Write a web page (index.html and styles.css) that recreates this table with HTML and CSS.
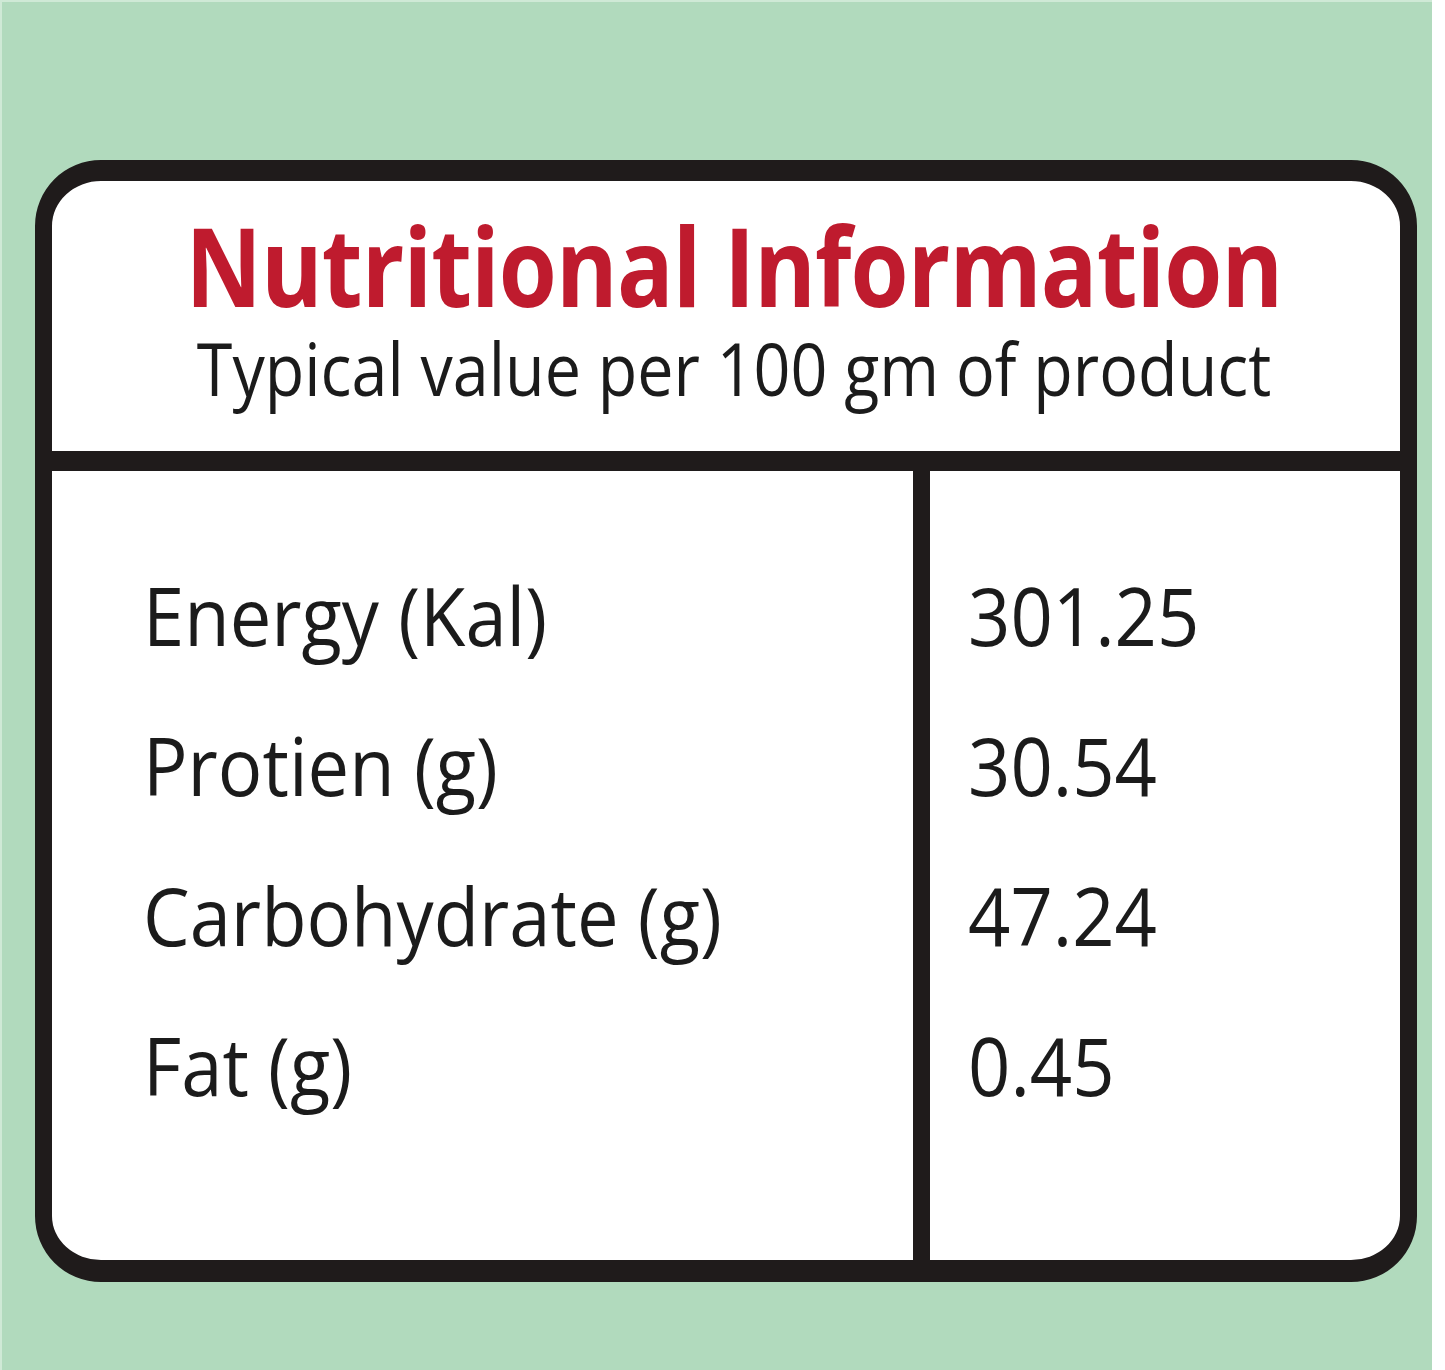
FILE: index.html
```html
<!DOCTYPE html>
<html lang="en">
<head>
<meta charset="utf-8">
<title>Nutritional Information</title>
<link rel="stylesheet" href="styles.css">
</head>
<body>
<div class="panel">
  <section class="card">
    <header class="card-head">
      <h1 class="title"><span class="squeeze">Nutritional Information</span></h1>
      <p class="subtitle"><span class="squeeze">Typical value per 100 gm of product</span></p>
    </header>
    <div class="card-body">
      <div class="col col-names">
        <div class="row"><span class="squeeze left">Energy (Kal)</span></div>
        <div class="row"><span class="squeeze left">Protien (g)</span></div>
        <div class="row"><span class="squeeze left">Carbohydrate (g)</span></div>
        <div class="row"><span class="squeeze left">Fat (g)</span></div>
      </div>
      <div class="col col-values">
        <div class="row"><span class="squeeze left">301.25</span></div>
        <div class="row"><span class="squeeze left">30.54</span></div>
        <div class="row"><span class="squeeze left">47.24</span></div>
        <div class="row"><span class="squeeze left">0.45</span></div>
      </div>
    </div>
  </section>
</div>
</body>
</html>
```

FILE: styles.css
```css
html, body {
  margin: 0;
  padding: 0;
  background: #ffffff;
}

body {
  width: 1445px;
  height: 1370px;
  overflow: hidden;
  font-family: "Open Sans", "Noto Sans", sans-serif;
  color: #1b1b1b;
}

.panel {
  box-sizing: border-box;
  width: 1432px;
  height: 1370px;
  background: #b1dabd;
  border-left: 2px solid #cfe9d6;
  border-top: 2px solid #cfe9d6;
  padding: 158px 0 0 33px;
}

.card {
  box-sizing: border-box;
  width: 1382px;
  height: 1122px;
  background: #ffffff;
  border-style: solid;
  border-color: #1f1b1b;
  border-width: 21px 17px 22px 17px;
  border-radius: 66px;
  display: flex;
  flex-direction: column;
}

.card-head {
  height: 290px;
  flex: none;
  box-sizing: border-box;
  border-bottom: 20px solid #1f1b1b;
  text-align: center;
  padding: 29px 0 0 16px;
}

.squeeze {
  display: inline-block;
  transform-origin: center;
  white-space: nowrap;
}

.squeeze.left {
  transform-origin: left center;
}

.title {
  margin: 0;
  font-size: 109px;
  line-height: 109px;
  height: 109px;
  font-weight: 700;
  color: #bf1b2e;
  letter-spacing: -1px;
}

.title .squeeze {
  transform: scaleX(0.861);
}

.subtitle {
  margin: 12px 0 0 0;
  font-size: 73px;
  line-height: 73px;
  font-weight: 400;
  color: #1b1b1b;
}

.subtitle .squeeze {
  transform: scaleX(0.885);
}

.card-body {
  flex: 1;
  display: flex;
}

.col {
  box-sizing: border-box;
  padding-top: 69px;
}

.col-names {
  width: 878px;
  border-right: 17px solid #1f1b1b;
  padding-left: 91px;
}

.col-values {
  flex: 1;
  padding-left: 38px;
}

.row {
  height: 150px;
  font-size: 81px;
  line-height: 150px;
  white-space: nowrap;
}

.row .squeeze {
  transform: scaleX(0.915);
}
```
